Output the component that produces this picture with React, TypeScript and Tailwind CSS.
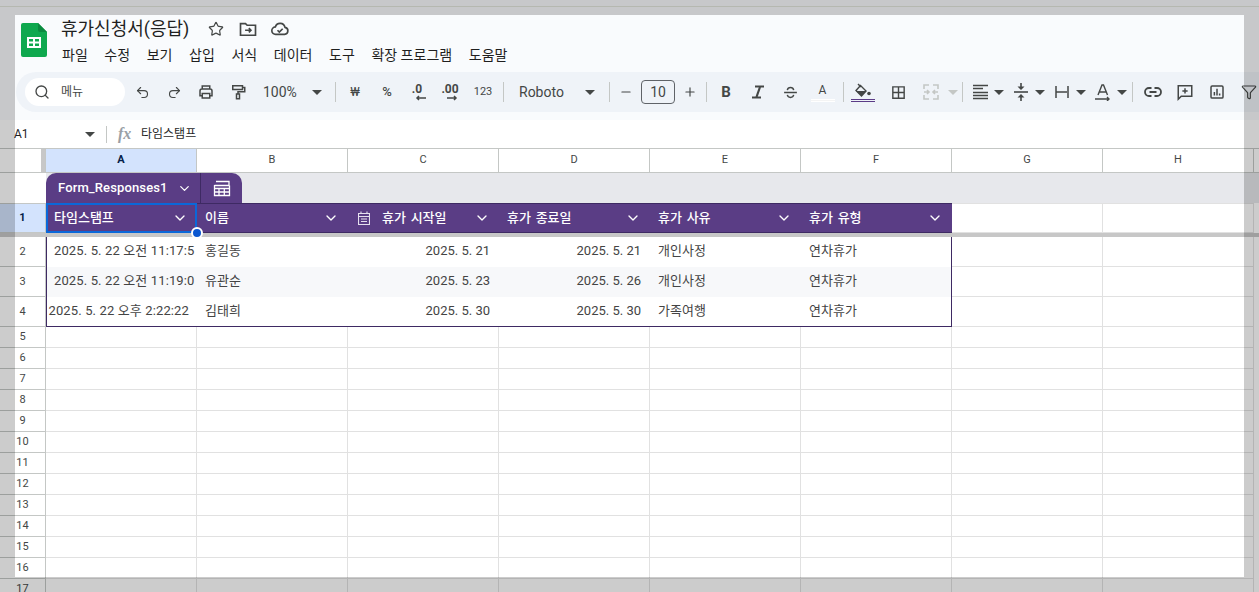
import React from "react";
import { Search, Undo2, Redo2, Star, ChevronDown, Minus, Plus, Filter } from "lucide-react";

const KR = "font-['Roboto','Noto_Sans_CJK_KR',sans-serif]";
const S = ({ children, size = 18, cls = "" }: { children: React.ReactNode; size?: number; cls?: string }) => (
  <svg width={size} height={size} viewBox="0 0 24 24" fill="none" stroke="#444746" strokeWidth={2} className={cls}>{children}</svg>
);
const Tri = ({ c = "#444746" }: { c?: string }) => (
  <svg width="10" height="5" viewBox="0 0 10 5"><path d="M0 0h10L5 5z" fill={c} /></svg>
);
const Tool = ({ children, w = "w-[32px]", cls = "" }: { children: React.ReactNode; w?: string; cls?: string }) => (
  <div className={`flex h-full shrink-0 items-center justify-center text-[#444746] ${w} ${cls}`}>{children}</div>
);
const Sep = ({ cls = "" }: { cls?: string }) => (
  <div className={`flex h-full w-[8px] shrink-0 items-center justify-center ${cls}`}><div className="h-5 w-px bg-[#c4c7c5]" /></div>
);
const DD = ({ children }: { children: React.ReactNode }) => (
  <div className="flex h-full w-[41px] shrink-0 items-center pl-[3px] text-[#444746]">
    <div className="flex w-[22px] justify-center">{children}</div>
    <div className="ml-[1px] flex w-[14px] justify-center"><Tri /></div>
  </div>
);

const menus = ["파일", "수정", "보기", "삽입", "서식", "데이터", "도구", "확장 프로그램", "도움말"];
const colLetters = ["A", "B", "C", "D", "E", "F", "G", "H"];
const heads = ["타임스탬프", "이름", "휴가 시작일", "휴가 종료일", "휴가 사유", "휴가 유형"];
const rows = [
  { n: 2, ts: "2025. 5. 22 오전 11:17:5", name: "홍길동", a: "2025. 5. 21", b: "2025. 5. 21", r: "개인사정", t: "연차휴가", tr: false, bg: "", pb: "pb-[2px]" },
  { n: 3, ts: "2025. 5. 22 오전 11:19:0", name: "유관순", a: "2025. 5. 23", b: "2025. 5. 26", r: "개인사정", t: "연차휴가", tr: false, bg: "bg-[#f7f8fa]", pb: "pb-[2px]" },
  { n: 4, ts: "2025. 5. 22 오후 2:22:22", name: "김태희", a: "2025. 5. 30", b: "2025. 5. 30", r: "가족여행", t: "연차휴가", tr: true, bg: "", pb: "pb-[1px]" },
];
const empty = [5, 6, 7, 8, 9, 10, 11, 12, 13, 14, 15, 16, 17];

const RowHead = ({ n, cls = "" }: { n: number; cls?: string }) => (
  <div className={`flex h-full w-[46px] shrink-0 items-center justify-center border-r border-b border-[#c4c7c5] font-['Roboto',sans-serif] text-[11px] text-[#444746] ${cls}`}>{n}</div>
);
const Cell = ({ children, cls = "" }: { children?: React.ReactNode; cls?: string }) => (
  <div className={`flex h-full w-[151px] shrink-0 items-center overflow-hidden whitespace-nowrap border-r border-b border-[#e1e1e1] text-[13px] text-[#444] ${cls}`}>{children}</div>
);

export default function App() {
  return (
    <div className={`relative h-[592px] w-[1259px] overflow-hidden bg-[#f9fbfd] ${KR}`}>
      {/* title area */}
      <div className="flex h-[72px] pl-[21px] pt-[23px]">
        <svg width="26" height="34" viewBox="0 0 26 34" className="shrink-0">
          <path d="M2 0h15l9 9v23a2 2 0 0 1-2 2H2a2 2 0 0 1-2-2V2a2 2 0 0 1 2-2z" fill="#0fa84e" />
          <path d="M17 0l9 9h-7a2 2 0 0 1-2-2z" fill="#0b8a3f" />
          <path d="M6 14h14v11H6z" fill="#fff" />
          <path d="M8 16h4v2.5H8zM14 16h4v2.5h-4zM8 20.5h4V23H8zM14 20.5h4V23h-4z" fill="#0fa84e" />
        </svg>
        <div className="ml-[14px] -mt-[6px] flex flex-col">
          <div className="flex h-[24px] items-center">
            <span className="w-[139px] text-[18px] leading-6 text-[#1f1f1f]">휴가신청서(응답)</span>
            <div className="flex w-[32px] justify-center"><Star size={16} strokeWidth={1.8} color="#444746" /></div>
            <div className="flex w-[32px] justify-center">
              <S size={20}><path d="M3 5.500h6l2 2h10v12H3z" /><path d="M8.500 13.500h7M13 11l2.500 2.500L13 16" /></S>
            </div>
            <div className="flex w-[32px] justify-center">
              <S size={20}><path d="M7 18.500a4.500 4.500 0 0 1-.6-9A6 6 0 0 1 18 10a4.300 4.300 0 0 1-.5 8.500z" /><path d="M9 13.500l2.200 2.200 4-4" /></S>
            </div>
          </div>
          <div className="ml-[1px] mt-[3px] flex h-[22px] items-center gap-[16.6px] text-[14px] leading-5 text-[#1f1f1f]">
            {menus.map((m) => <span key={m} className="whitespace-nowrap">{m}</span>)}
          </div>
        </div>
      </div>

      {/* toolbar */}
      <div className="ml-[16px] flex h-[40px] w-[1300px] items-center rounded-l-[20px] bg-[#eff3f8] pl-[9px]">
        <div className="flex h-[28px] w-[100px] shrink-0 items-center rounded-full bg-white pl-[9px]">
          <Search size={16} color="#444746" strokeWidth={2} />
          <span className="ml-[11px] text-[12px] text-[#444746]">메뉴</span>
        </div>
        <div className="h-full w-px shrink-0" />
        <Tool><Undo2 size={15} strokeWidth={1.8} /></Tool>
        <Tool><Redo2 size={15} strokeWidth={1.8} /></Tool>
        <Tool>
          <S><path d="M7 8V4h10v4M7 17H4v-6.500A2.500 2.500 0 0 1 6.500 8h11a2.500 2.500 0 0 1 2.500 2.500V17h-3M7 14h10v6H7z" /></S>
        </Tool>
        <Tool>
          <S><path d="M5 3.500h13v5H5zM18 6h3v5.500h-9v3M10 14.500h4V21h-4z" /></S>
        </Tool>
        <div className="flex h-full w-[77px] shrink-0 items-center pl-[9px] text-[#444746]">
          <span className="w-[49px] text-[14px]">100%</span><Tri />
        </div>
        <Sep />
        <Tool><span className="text-[13px]">₩</span></Tool>
        <Tool><span className="text-[13px] font-medium">%</span></Tool>
        <Tool>
          <div className="relative -ml-[4px] flex h-[18px] w-[20px] justify-center text-[12px] font-bold leading-3">
            .0
            <svg width="12" height="6" viewBox="0 0 12 6" className="absolute bottom-0 right-0"><path d="M11 3H2M4 1L2 3l2 2" stroke="#444746" strokeWidth="1.500" fill="none" /></svg>
          </div>
        </Tool>
        <Tool>
          <div className="relative -ml-[2px] flex h-[18px] w-[20px] justify-center text-[12px] font-bold leading-3">
            .00
            <svg width="12" height="6" viewBox="0 0 12 6" className="absolute bottom-0 right-[2px]"><path d="M1 3h9M8 1l2 2-2 2" stroke="#444746" strokeWidth="1.500" fill="none" /></svg>
          </div>
        </Tool>
        <Tool><span className="text-[11px]">123</span></Tool>
        <Sep />
        <div className="flex h-full w-[98px] shrink-0 items-center pl-[12px] text-[#444746]">
          <span className="w-[66px] text-[14px]">Roboto</span><Tri />
        </div>
        <Sep />
        <Tool w="w-[26px]"><Minus size={14} strokeWidth={2} /></Tool>
        <div className="mx-[2px] flex h-[24px] w-[34px] shrink-0 items-center justify-center rounded-[4px] border border-[#5f6368] text-[14px] text-[#444746]">10</div>
        <Tool w="w-[25px]"><Plus size={14} strokeWidth={2} /></Tool>
        <Sep />
        <Tool><span className="text-[15px] font-bold">B</span></Tool>
        <Tool>
          <svg width="14" height="14" viewBox="0 0 14 14" fill="none" stroke="#444746">
            <path d="M4 1.500h9" strokeWidth="2" /><path d="M9 2L5.500 12" strokeWidth="2.200" /><path d="M1 12.500h9" strokeWidth="2" />
          </svg>
        </Tool>
        <Tool>
          <S size={17}><path d="M3 12h18M7.500 8.500C8 6 10 5 12 5s4 1 4.500 3.500M7.500 15.500C8 18 10 19 12 19s4-1 4.500-3.500" /></S>
        </Tool>
        <Tool w="w-[33px]">
          <div className="flex w-[24px] flex-col items-center">
            <span className="text-[12px] leading-4">A</span>
            <div className="mt-[1px] h-[3px] w-full border-y border-white bg-[#f4f4f4]" />
          </div>
        </Tool>
        <Sep />
        <Tool>
          <div className="flex w-[24px] flex-col items-center">
            <svg width="18" height="15" viewBox="0 0 18 15">
              <path d="M2 7.500l4.500-5 5.500 5.500-4.500 5z" fill="none" stroke="#444746" strokeWidth="1.400" />
              <path d="M2 8h10.500L7.500 13z" fill="#444746" />
              <path d="M4 1l3 3" stroke="#444746" strokeWidth="1.400" />
              <circle cx="15" cy="10.500" r="1.800" fill="#444746" />
            </svg>
            <div className="mt-[1px] h-[3px] w-full border-y border-[#5b3b87]" />
          </div>
        </Tool>
        <Tool w="w-[34px]" cls="ml-[2px]">
          <S size={17}><path d="M4 4h16v16H4zM12 4v16M4 12h16" /></S>
        </Tool>
        <Tool>
          <svg width="18" height="18" viewBox="0 0 18 18" fill="none" stroke="#c4c7c5" strokeWidth="1.600">
            <path d="M2 6V2h5M16 6V2h-5M2 12v4h5M16 12v4h-5M2 9h4M16 9h-4M5 7l2 2-2 2M13 7l-2 2 2 2" />
          </svg>
        </Tool>
        <div className="flex h-full w-[11px] shrink-0 items-center justify-center"><Tri c="#c4c7c5" /></div>
        <Sep />
        <DD>
          <svg width="15" height="16" viewBox="0 0 15 16" fill="none" stroke="#444746" strokeWidth="1.300"><path d="M0 1.500h15M0 4.500h10M0 8.500h15M0 11.500h15M0 14.500h15" /></svg>
        </DD>
        <DD>
          <svg width="14" height="18" viewBox="0 0 14 18"><path d="M0 9h14" stroke="#444746" strokeWidth="1.600" /><path d="M7 0v4M7 14v4" stroke="#444746" strokeWidth="1.600" /><path d="M3.500 3.500h7L7 7zM3.500 14.500h7L7 11z" fill="#444746" /></svg>
        </DD>
        <DD>
          <svg width="14" height="14" viewBox="0 0 14 14" fill="none" stroke="#444746" strokeWidth="1.500"><path d="M1 1v12M13 1v12M1 7h11" /></svg>
        </DD>
        <DD>
          <svg width="16" height="17" viewBox="0 0 16 17" fill="none" stroke="#444746" strokeWidth="1.400"><path d="M3 11L7 1h1.500l4 10M4.500 8h6.500M0 15h14M12 13l2 2-2 2" /></svg>
        </DD>
        <Sep cls="-ml-[2px]" />
        <Tool w="w-[32px]" cls="ml-[1px]">
          <svg width="18" height="10" viewBox="0 0 18 10" fill="none" stroke="#444746" strokeWidth="1.800"><path d="M7.500 1H5a4 4 0 0 0 0 8h2.500M10.500 1H13a4 4 0 0 1 0 8h-2.500M5.500 5h7" /></svg>
        </Tool>
        <Tool>
          <S><path d="M3 3.500h18v14H7l-4 4z" /><path d="M12 7v7M8.500 10.500h7" /></S>
        </Tool>
        <Tool>
          <S><rect x="4" y="4" width="16" height="16" rx="1.500" /><path d="M8.500 16.500V12M12 16.500V7.500M15.500 16.500V14" /></S>
        </Tool>
        <Tool><Filter size={16} strokeWidth={1.8} /></Tool>
      </div>

      {/* formula bar */}
      <div className="mt-[8px] flex h-[29px] items-center border-b border-[#c4c7c5] bg-white text-[#444746]">
        <span className="ml-[14px] w-[71px] font-['Roboto',sans-serif] text-[12px] text-[#1f1f1f]">A1</span>
        <Tri />
        <div className="ml-[11px] h-[17px] w-px bg-[#c4c7c5]" />
        <span className="ml-[11px] w-[23px] font-['Liberation_Serif',serif] text-[16px] font-bold italic text-[#9aa0a6]">fx</span>
        <span className="text-[12px] text-[#1f1f1f]">타임스탬프</span>
      </div>

      {/* sheet */}
      <div className="bg-white">
        <div className="flex h-[24px] w-[1300px] border-b border-[#c4c7c5]">
          <div className="flex h-full w-[46px] shrink-0 justify-end border-r border-[#c4c7c5]"><div className="h-full w-[4px] bg-[#c7c7c7]" /></div>
          {colLetters.map((c, i) => (
            <div key={c} className={`flex h-full w-[151px] shrink-0 items-center justify-center border-r border-[#c4c7c5] font-['Roboto',sans-serif] text-[11px] ${i === 0 ? "bg-[#d3e3fd] font-bold text-[#041e49]" : "text-[#444746]"}`}>{c}</div>
          ))}
        </div>
        <div className="flex h-[30px] w-[1300px]">
          <div className="h-full w-[46px] shrink-0" />
          <div className="flex h-full flex-1 items-end bg-[#e7e8ec]">
            <div className="flex h-[30px] w-[196px] items-center rounded-t-[10px] bg-[#5a3d85] text-white">
              <span className="ml-[12px] w-[116px] whitespace-nowrap text-[13px] font-medium tracking-[0.13px]">Form_Responses1</span>
              <ChevronDown size={15} strokeWidth={2} className="ml-[3px]" />
              <div className="ml-[8px] h-full w-px bg-[#3e2a63]" />
              <div className="flex flex-1 justify-center">
                <svg width="18" height="18" viewBox="0 0 18 18" fill="none" stroke="#fff" strokeWidth="1.300">
                  <path d="M3 2.500h13v4H1.500" /><path d="M1.500 6v10.500H16.500V6.500M6 9v7.500M11.300 9v7.500M1.500 9.500h15M1.500 13h15" />
                </svg>
              </div>
            </div>
          </div>
        </div>
        <div className="flex h-[30px] w-[1300px]">
          <RowHead n={1} cls="border-t border-t-[#c4c7c5] bg-[#d3e3fd] font-bold !text-[#041e49]" />
          {heads.map((h, i) => (
            <div key={h} className={`flex h-full w-[151px] shrink-0 items-center justify-between bg-[#5a3d85] pl-[8px] pr-[9px] text-[13px] font-medium text-white [word-spacing:1.5px] ${i === 0 ? "border-2 border-[#0b68d9] !pl-[6px] !pr-[7px]" : "border-y border-[#3e2a63]"}`}>
              <span className="flex items-center whitespace-nowrap">
                {i === 2 && (
                  <svg width="12" height="14" viewBox="0 0 12 14" fill="none" stroke="#e5e0ee" strokeWidth="1.100" className="ml-[2px] mr-[12px]">
                    <path d="M.5 2.500h11v11H.5zM.5 5.500h11M3 .5v2M9 .5v2M3 8h6M3 10.500h6" />
                  </svg>
                )}
                {h}
              </span>
              <ChevronDown size={16} strokeWidth={2} />
            </div>
          ))}
          <Cell cls="border-t border-t-[#e1e1e1]" />
          <Cell cls="border-t border-t-[#e1e1e1]" />
        </div>
        <div className="h-[4px] bg-[#c7c7c7]" />
        {rows.map((r) => (
          <div key={r.n} className="flex h-[30px] w-[1300px]">
            <RowHead n={r.n} cls="pt-[1px]" />
            <div className={`flex h-full w-[906px] shrink-0 border-l border-r border-[#3e2a63] ${r.pb} ${r.bg} ${r.n === 4 ? "border-b" : ""}`}>
              <div className={`flex h-full w-[150px] shrink-0 items-center overflow-hidden whitespace-nowrap text-[13px] tracking-[0.13px] text-[#444] ${r.tr ? "justify-end pr-[8px]" : "pl-[7px]"}`}>{r.ts}</div>
              <div className="flex w-[151px] shrink-0 items-center pl-[8px] text-[13px] text-[#444]">{r.name}</div>
              <div className="flex w-[151px] shrink-0 items-center justify-end pr-[9px] text-[13px] text-[#444]">{r.a}</div>
              <div className="flex w-[151px] shrink-0 items-center justify-end pr-[9px] text-[13px] text-[#444]">{r.b}</div>
              <div className="flex w-[151px] shrink-0 items-center pl-[8px] text-[13px] text-[#444]">{r.r}</div>
              <div className="flex w-[151px] shrink-0 items-center pl-[8px] text-[13px] text-[#444]">{r.t}</div>
            </div>
            <Cell /><Cell />
          </div>
        ))}
        {empty.map((n) => (
          <div key={n} className="flex h-[21px] w-[1300px]">
            <RowHead n={n} />
            {colLetters.map((c) => <Cell key={c} />)}
          </div>
        ))}
      </div>

      {/* selection handle */}
      <div className="absolute left-[191px] top-[227px] h-[12px] w-[12px] rounded-full border-2 border-white bg-[#0b57d0]" />

      {/* dimmed margin over the window */}
      <div className="absolute inset-x-0 top-0 h-[15px] bg-black/20"><div className="mt-[6px] h-px bg-[#b5b8b0]" /></div>
      <div className="absolute inset-x-0 bottom-0 h-[15px] bg-black/20" />
      <div className="absolute bottom-[15px] left-0 top-[15px] w-[15px] bg-black/20" />
      <div className="absolute bottom-[15px] right-0 top-[15px] w-[15px] bg-black/20" />
    </div>
  );
}
